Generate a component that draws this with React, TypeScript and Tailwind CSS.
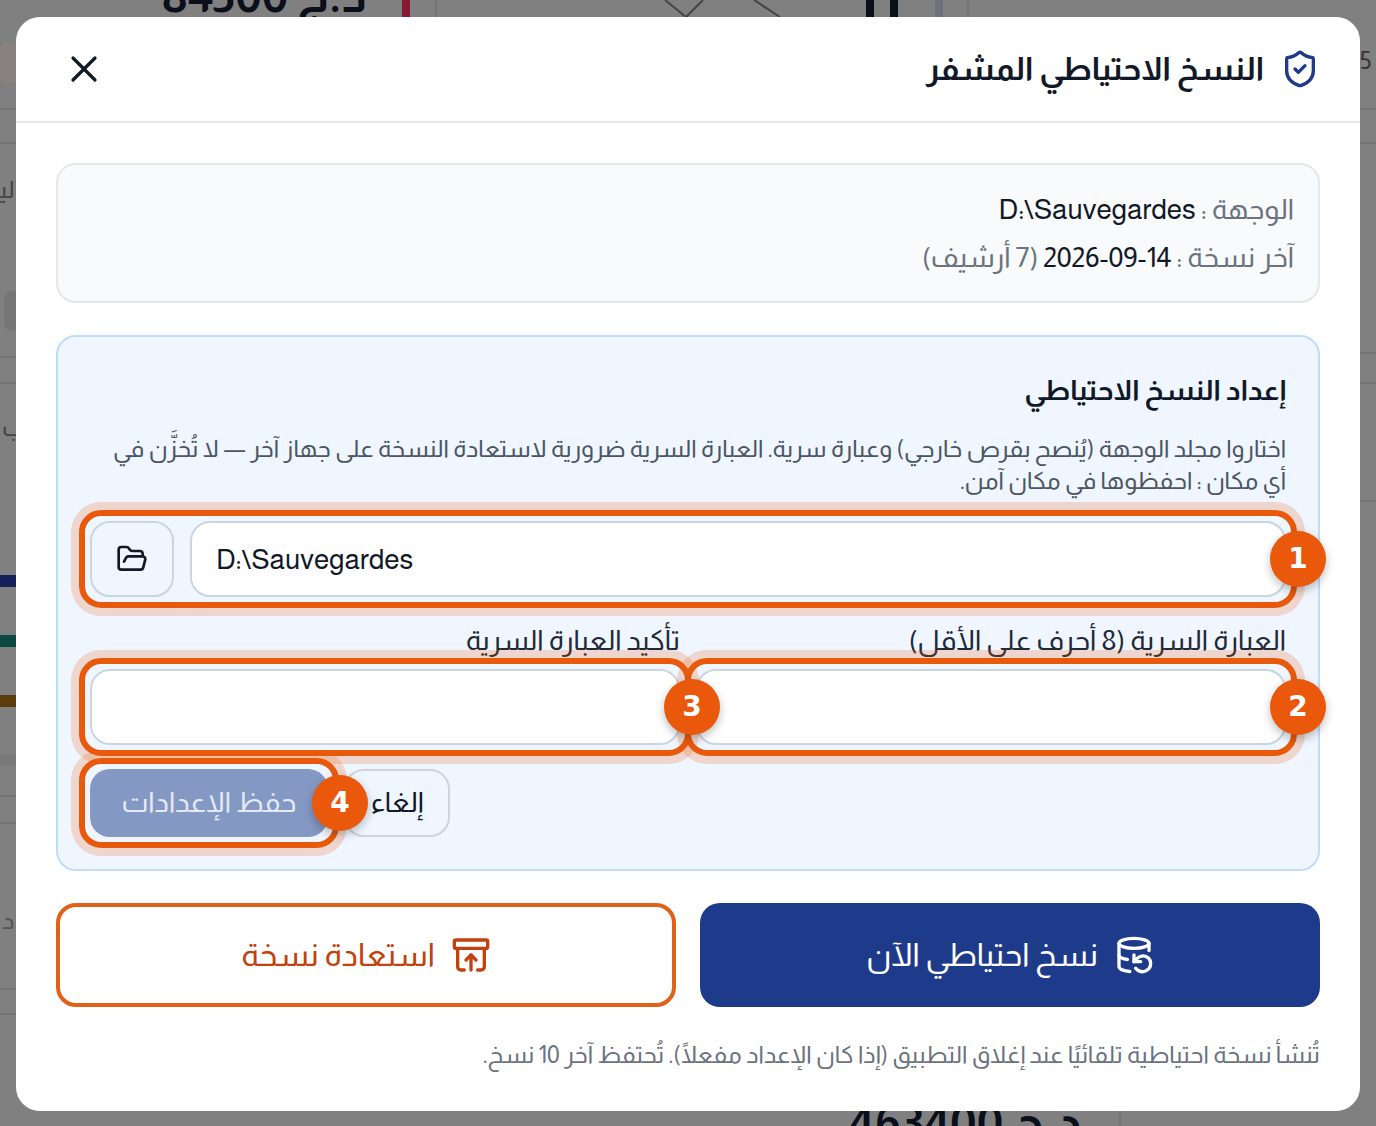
import { ArchiveRestore, DatabaseBackup, FolderOpen, ShieldCheck, X } from 'lucide-react';

function Badge({ n }: { n: number }) {
  return (
    <span className='absolute -right-[40px] top-1/2 z-20 flex h-14 w-14 -translate-y-1/2 items-center justify-center rounded-full bg-[#ea580c] font-["DejaVu_Sans",sans-serif] text-[28px] font-bold text-white shadow-[0_4px_10px_rgba(0,0,0,0.25)]'>
      {n}
    </span>
  );
}

function Highlight() {
  return (
    <span className="pointer-events-none absolute -inset-[11px] z-10 rounded-[22px] border-[6px] border-[#e8590c] shadow-[0_0_0_8px_rgba(234,88,12,0.2)]" />
  );
}

function Field({ label, n }: { label: string; n: number }) {
  return (
    <div className="flex flex-col">
      <label className="h-[32px] text-[28px] leading-[32px] text-[#1f2937]">{label}</label>
      <div className="relative mt-3">
        <input className="block h-[76px] w-full rounded-[20px] border-2 border-[#cbd5e1] bg-white" />
        <Highlight />
        <Badge n={n} />
      </div>
    </div>
  );
}

// the page behind the dialog, only its edges show
function TopStrip() {
  return (
    <div className="col-span-3 flex h-[17px] overflow-hidden">
      <div dir="rtl" className="mb-[-4px] ml-[160px] h-[50px] w-[207px] shrink-0 self-end whitespace-nowrap text-right text-[48px] font-bold leading-[50px] text-[#0b0f19]">
        د.ج 84500
      </div>
      <div className="ml-[35px] w-2 shrink-0 bg-[#861a32]" />
      <div className="ml-[25px] w-[2px] shrink-0 bg-[#747474]" />
      <svg className="ml-[223px] w-[130px] shrink-0" viewBox="0 0 130 17" fill="none" stroke="#444" strokeWidth="2">
        <path d="M5 0 L26 17 L43 0 M94 0 L120 17" />
      </svg>
      <div className="ml-[76px] w-2 shrink-0 bg-[#0b0f19]" />
      <div className="ml-4 w-2 shrink-0 bg-[#0b0f19]" />
      <div className="ml-[37px] w-2 shrink-0 bg-[#6c717c]" />
      <div className="ml-6 w-[2px] shrink-0 bg-[#747474]" />
    </div>
  );
}

function LeftStrip() {
  return (
    <div className="flex flex-col overflow-hidden">
      <div className="mt-[26px] h-[40px] rounded-l-lg bg-[#8a8280]" />
      <div className="mt-[25px] h-[2px] bg-[#747474]" />
      <div className="mt-[32px] h-[2px] bg-[#747474]" />
      <div className="ml-[-10px] mt-[31px] h-[30px] whitespace-nowrap text-[24px] leading-[30px] text-[#444]">لير</div>
      <div className="ml-1 mt-[86px] h-[40px] rounded-l-lg bg-[#767676]" />
      <div className="mt-[25px] h-[2px] bg-[#747474]" />
      <div className="mt-[24px] h-[2px] bg-[#747474]" />
      <div className="ml-[2px] mt-[29px] h-[30px] text-[24px] leading-[30px] text-[#444]">ب</div>
      <div className="mt-[132px] h-3 bg-[#16215a]" />
      <div className="mt-[48px] h-3 bg-[#0b4a42]" />
      <div className="mt-[48px] h-3 bg-[#5c3d0a]" />
      <div className="mt-[47px] h-3 bg-[#7a7a7a]" />
      <div className="mt-[29px] h-[2px] bg-[#747474]" />
      <div className="mt-[25px] h-[2px] bg-[#747474]" />
      <div className="ml-[2px] mt-[82px] h-[30px] text-[24px] leading-[30px] text-[#555]">د</div>
      <div className="mt-[52px] h-[2px] bg-[#747474]" />
      <div className="mt-[23px] h-[2px] bg-[#747474]" />
    </div>
  );
}

function RightStrip() {
  return (
    <div className="flex flex-col overflow-hidden">
      <div className="mt-[29px] h-[30px] text-[24px] leading-[30px] text-[#333]">5</div>
      <div className="mt-[32px] h-[2px] bg-[#747474]" />
      <div className="mt-[32px] h-[2px] bg-[#747474]" />
      <div className="mt-[208px] h-[2px] bg-[#747474]" />
      <div className="mt-[28px] h-[2px] bg-[#747474]" />
      <div className="mt-[116px] h-[2px] bg-[#747474]" />
    </div>
  );
}

function BottomStrip() {
  return (
    <div className="col-span-3 flex h-[15px] overflow-hidden">
      <div dir="rtl" className="ml-[850px] mt-[-13px] h-[50px] w-[232px] shrink-0 whitespace-nowrap text-right text-[48px] font-bold leading-[50px] text-[#0b0f19]">
        د.ج 463400
      </div>
      <div className="ml-[37px] w-[2px] shrink-0 bg-[#747474]" />
    </div>
  );
}

export default function App() {
  return (
    <div className='grid h-[1126px] w-[1376px] grid-cols-[16px_1344px_16px] grid-rows-[17px_1094px_15px] overflow-hidden bg-[#808080] font-["Almarai",sans-serif]'>
      <TopStrip />
      <LeftStrip />

      <div dir="rtl" className="rounded-[24px] bg-white">
        <header className="flex h-[106px] items-center justify-between border-b-2 border-[#e5e7eb] px-10">
          <div className="flex items-center gap-4">
            <ShieldCheck className="h-10 w-10 text-[#1e3a8a]" strokeWidth={2} />
            <h2 className="text-[32px] font-bold text-[#111827]">النسخ الاحتياطي المشفر</h2>
          </div>
          <button className="flex h-14 w-14 items-center justify-center text-[#111827]">
            <X className="h-11 w-11" strokeWidth={1.75} />
          </button>
        </header>

        <div className="flex flex-col px-10 pt-10">
          <div className="h-[140px] rounded-[20px] border-2 border-[#e5e7eb] bg-[#f9fafb] px-6 py-[21px] text-[28px] leading-[48px] text-[#6b7280]">
            <p>
              الوجهة : <span className="text-[#111827]">D:\Sauvegardes</span>
            </p>
            <p>
              آخر نسخة : <bdi className="text-[#111827]">2026-09-14</bdi> (7 أرشيف)
            </p>
          </div>

          <section className="mt-8 h-[536px] rounded-[20px] border-2 border-[#bfdbfe] bg-[#eff6ff] px-8 pt-8">
            <h3 className="text-[28px] font-bold leading-[44px] text-[#111827]">إعداد النسخ الاحتياطي</h3>
            <p className="mt-[20px] text-[24px] leading-[32px] text-[#4b5563]">
              اختاروا مجلد الوجهة (يُنصح بقرص خارجي) وعبارة سرية. العبارة السرية ضرورية لاستعادة النسخة على جهاز آخر — لا تُخزَّن في أي مكان : احفظوها في مكان آمن.
            </p>

            <div className="relative mt-[24px] flex gap-4">
              <div
                dir="ltr"
                className="flex h-[76px] flex-1 items-center rounded-[20px] border-2 border-[#cbd5e1] bg-white px-6 pt-[2px] text-[28px] text-[#111827]"
              >
                D:\Sauvegardes
              </div>
              <button className="flex h-[76px] w-[84px] items-center justify-center rounded-[20px] border-2 border-[#cbd5e1] bg-[#eff6ff] text-[#111827]">
                <FolderOpen className="h-8 w-8" strokeWidth={2} />
              </button>
              <Highlight />
              <Badge n={1} />
            </div>

            <div className="mt-[28px] grid grid-cols-2 gap-4">
              <Field label="العبارة السرية (8 أحرف على الأقل)" n={2} />
              <Field label="تأكيد العبارة السرية" n={3} />
            </div>

            <div className="mt-6 flex justify-end gap-4">
              <button className="h-[68px] w-[106px] rounded-[20px] border-2 border-[#cbd5e1] text-[28px] text-[#111827]">
                إلغاء
              </button>
              <div className="relative">
                <button className="h-[68px] w-[238px] rounded-[20px] bg-[#8498c4] text-[28px] text-[#e4e9f4]">
                  حفظ الإعدادات
                </button>
                <Highlight />
                <Badge n={4} />
              </div>
            </div>
          </section>

          <div className="mt-8 grid grid-cols-2 gap-6">
            <button className="flex h-[104px] items-center justify-center gap-4 rounded-[20px] bg-[#1e3a8a] text-[32px] text-white">
              <DatabaseBackup className="h-10 w-10" strokeWidth={2} />
              نسخ احتياطي الآن
            </button>
            <button className="flex h-[104px] items-center justify-center gap-4 rounded-[20px] border-4 border-[#e2611a] text-[32px] text-[#c2410c]">
              <ArchiveRestore className="h-10 w-10" strokeWidth={2} />
              استعادة نسخة
            </button>
          </div>

          <p className="mt-8 text-[24px] leading-[32px] text-[#6b7280]">
            تُنشأ نسخة احتياطية تلقائيًا عند إغلاق التطبيق (إذا كان الإعداد مفعلًا). تُحتفظ آخر 10 نسخ.
          </p>
        </div>
      </div>

      <RightStrip />
      <BottomStrip />
    </div>
  );
}
